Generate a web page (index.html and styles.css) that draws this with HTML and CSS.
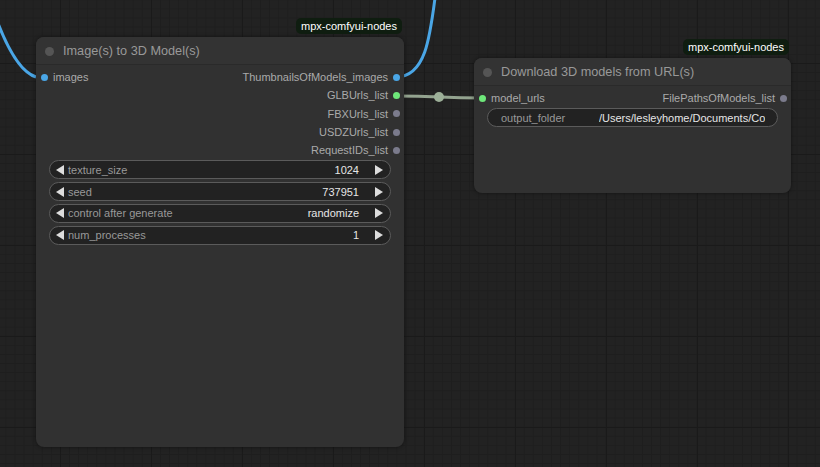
FILE: index.html
```html
<!DOCTYPE html>
<html>
<head>
<meta charset="utf-8">
<link rel="stylesheet" href="styles.css">
</head>
<body>
<div class="canvas">
  <svg class="links" width="820" height="467" viewBox="0 0 820 467">
    <path d="M -4 18 C 6 45, 20 72, 36 77" class="link blue"/>
    <path d="M 396 77 C 425 77, 430 40, 436 -10" class="link blue"/>
    <path d="M 396 96 C 440 96, 440 98, 482 98" class="link green"/>
    <circle cx="439" cy="97" r="5" class="mid"/>
  </svg>

  <div class="node n1">
    <div class="badge">mpx-comfyui-nodes</div>
    <div class="title"><span class="tdot"></span><span class="ttext">Image(s) to 3D Model(s)</span></div>
    <div class="body">
      <div class="slots">
        <div class="row">
          <div class="in"><span class="dot blue"></span><span>images</span></div>
          <div class="out"><span>ThumbnailsOfModels_images</span><span class="dot blue"></span></div>
        </div>
        <div class="row">
          <div class="in"></div>
          <div class="out"><span>GLBUrls_list</span><span class="dot green"></span></div>
        </div>
        <div class="row">
          <div class="in"></div>
          <div class="out"><span>FBXUrls_list</span><span class="dot gray"></span></div>
        </div>
        <div class="row">
          <div class="in"></div>
          <div class="out"><span>USDZUrls_list</span><span class="dot gray"></span></div>
        </div>
        <div class="row">
          <div class="in"></div>
          <div class="out"><span>RequestIDs_list</span><span class="dot gray"></span></div>
        </div>
      </div>
      <div class="widgets">
        <div class="widget num"><span class="arr left"></span><span class="label">texture_size</span><span class="value">1024</span><span class="arr right"></span></div>
        <div class="widget num"><span class="arr left"></span><span class="label">seed</span><span class="value">737951</span><span class="arr right"></span></div>
        <div class="widget num"><span class="arr left"></span><span class="label">control after generate</span><span class="value">randomize</span><span class="arr right"></span></div>
        <div class="widget num"><span class="arr left"></span><span class="label">num_processes</span><span class="value">1</span><span class="arr right"></span></div>
      </div>
    </div>
  </div>

  <div class="node n2">
    <div class="badge">mpx-comfyui-nodes</div>
    <div class="title"><span class="tdot"></span><span class="ttext">Download 3D models from URL(s)</span></div>
    <div class="body">
      <div class="slots">
        <div class="row">
          <div class="in"><span class="dot green"></span><span>model_urls</span></div>
          <div class="out"><span>FilePathsOfModels_list</span><span class="dot gray"></span></div>
        </div>
      </div>
      <div class="widgets">
        <div class="widget text"><span class="label">output_folder</span><span class="tvalue">/Users/lesleyhome/Documents/Co</span></div>
      </div>
    </div>
  </div>
</div>
</body>
</html>
```
FILE: styles.css
```css
html, body {
  margin: 0;
  padding: 0;
}
body {
  width: 820px;
  height: 467px;
  overflow: hidden;
  font-family: "Liberation Sans", Arial, sans-serif;
  background-color: #222222;
  background-image:
    linear-gradient(to right, #1a1a1a 1px, transparent 1px),
    linear-gradient(to bottom, #1a1a1a 1px, transparent 1px),
    linear-gradient(to right, #1e1e1e 1px, transparent 1px),
    linear-gradient(to bottom, #1e1e1e 1px, transparent 1px);
  background-size: 91px 91px, 91px 91px, 9.1px 9.1px, 9.1px 9.1px;
  background-position: 60px 63px, 60px 63px, 5.4px 8.4px, 5.4px 8.4px;
}
.canvas {
  position: relative;
  width: 820px;
  height: 467px;
}
.links {
  position: absolute;
  left: 0;
  top: 0;
  z-index: 0;
}
.link {
  fill: none;
  stroke-width: 3;
}
.link.blue { stroke: #4aa6e6; }
.link.green { stroke: #93a38f; }
.mid { fill: #9caf98; }

.node {
  position: absolute;
  z-index: 1;
  background: #313131;
  border-radius: 8px;
  box-shadow: 0 0 4px rgba(0, 0, 0, 0.45);
  display: flex;
  flex-direction: column;
}
.n1 { left: 36px; top: 37px; width: 368px; height: 410px; }
.n2 { left: 474px; top: 58px; width: 317px; height: 135px; }

.badge {
  position: absolute;
  right: 2px;
  top: -19px;
  height: 16px;
  line-height: 16px;
  padding: 0 5px;
  background: #0f1d10;
  color: #ffffff;
  font-size: 11px;
  border-radius: 5px;
}

.title {
  height: 27px;
  background: #333333;
  border-radius: 8px 8px 0 0;
  border-bottom: 1px solid #2a2a2a;
  display: flex;
  align-items: center;
  padding-left: 9px;
  color: #999999;
  font-size: 12.7px;
}
.tdot {
  width: 9px;
  height: 9px;
  border-radius: 50%;
  background: #555555;
  margin-right: 9px;
  margin-top: 1px;
}
.ttext { margin-top: 1px; }

.body {
  padding: 3px 0 0 0;
  display: flex;
  flex-direction: column;
}
.row {
  height: 18.3px;
  display: flex;
  justify-content: space-between;
  align-items: center;
  font-size: 11px;
  color: #aaaaaa;
}
.in {
  display: flex;
  align-items: center;
  padding-left: 5px;
  gap: 5px;
}
.out {
  display: flex;
  align-items: center;
  padding-right: 4px;
  gap: 5px;
}
.dot {
  width: 7px;
  height: 7px;
  border-radius: 50%;
  display: inline-block;
}
.dot.blue { background: #4aa6e6; }
.dot.green { background: #6ee77a; }
.dot.gray { background: #7b7b8c; }

.widgets {
  display: flex;
  flex-direction: column;
  gap: 2.7px;
  padding: 1px 13px 0 13px;
}
.widget {
  height: 17px;
  border: 1px solid #5b5b5b;
  border-radius: 10px;
  background: #222222;
  display: flex;
  align-items: center;
  font-size: 11px;
  position: relative;
}
.widget .label {
  color: #999999;
}
.num .label {
  margin-left: 4px;
  flex: 1;
}
.num .value {
  color: #e6e6e6;
  margin-right: 16px;
}
.arr {
  width: 0;
  height: 0;
  border-top: 5px solid transparent;
  border-bottom: 5px solid transparent;
}
.arr.left {
  border-right: 8px solid #dddddd;
  margin-left: 6px;
}
.arr.right {
  border-left: 8px solid #dddddd;
  margin-right: 7px;
}
.text .label {
  margin-left: 13px;
  width: 98px;
}
.text .tvalue {
  color: #e6e6e6;
  white-space: nowrap;
  overflow: hidden;
}
```
